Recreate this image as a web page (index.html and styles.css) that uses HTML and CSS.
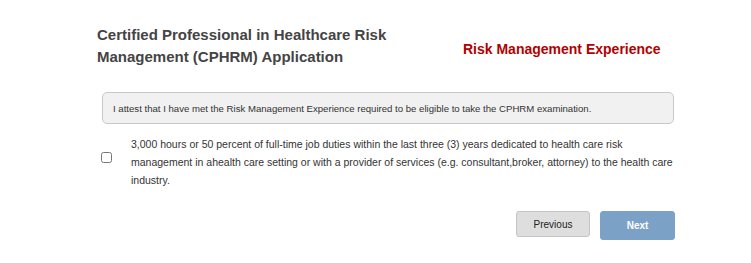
FILE: index.html
```html
<!DOCTYPE html>
<html>
<head>
<meta charset="utf-8">
<link rel="stylesheet" href="styles.css">
</head>
<body>
<div class="page">
  <div class="header">
    <h1 class="title">Certified Professional in Healthcare Risk Management (CPHRM) Application</h1>
    <h2 class="section">Risk Management Experience</h2>
  </div>
  <div class="alert">I attest that I have met the Risk Management Experience required to be eligible to take the CPHRM examination.</div>
  <label class="check-row">
    <span class="box-wrap"><input type="checkbox" class="box"></span>
    <span class="check-text">3,000 hours or 50 percent of full-time job duties within the last three (3) years dedicated to health care risk management in ahealth care setting or with a provider of services (e.g. consultant,broker, attorney) to the health care industry.</span>
  </label>
  <div class="actions">
    <button class="btn btn-prev">Previous</button>
    <button class="btn btn-next">Next</button>
  </div>
</div>
</body>
</html>
```

FILE: styles.css
```css
html, body {
  margin: 0;
  padding: 0;
  background: #ffffff;
}
body {
  font-family: "Liberation Sans", Arial, sans-serif;
  color: #333;
}
.page {
  width: 578px;
  margin-left: 97px;
  padding-top: 24px;
}
.header {
  display: flex;
  align-items: center;
}
.title {
  margin: 0;
  width: 310px;
  font-size: 15px;
  line-height: 22px;
  font-weight: bold;
  color: #444;
}
.section {
  margin: 0 0 0 56px;
  font-size: 14px;
  font-weight: bold;
  color: #b30000;
  padding-top: 6px;
}
.alert {
  margin: 24px 1px 0 5px;
  height: 32px;
  box-sizing: border-box;
  padding: 0 10px;
  display: flex;
  align-items: center;
  background: #f1f1f1;
  border: 1px solid #c8c8c8;
  border-radius: 5px;
  font-size: 9.6px;
  color: #333;
}
.check-row {
  display: flex;
  align-items: flex-start;
  margin-top: 11px;
  margin-left: 4px;
}
.box-wrap {
  width: 30px;
  flex: none;
  display: flex;
  padding-top: 17px;
}
.box {
  margin: 0;
  width: 11px;
  height: 11px;
}
.check-text {
  font-size: 10.5px;
  line-height: 18px;
  color: #333;
}
.actions {
  display: flex;
  justify-content: flex-end;
  gap: 10px;
  margin-top: 22px;
}
.btn {
  font-family: "Liberation Sans", Arial, sans-serif;
  font-size: 10px;
  border-radius: 3px;
  cursor: pointer;
}
.btn-prev {
  width: 74px;
  height: 26px;
  background: #dedede;
  border: 1px solid #c4c4c4;
  color: #222;
}
.btn-next {
  width: 75px;
  height: 29px;
  background: #7ba1c7;
  border: 1px solid #7ba1c7;
  color: #fff;
  font-weight: bold;
}
```
